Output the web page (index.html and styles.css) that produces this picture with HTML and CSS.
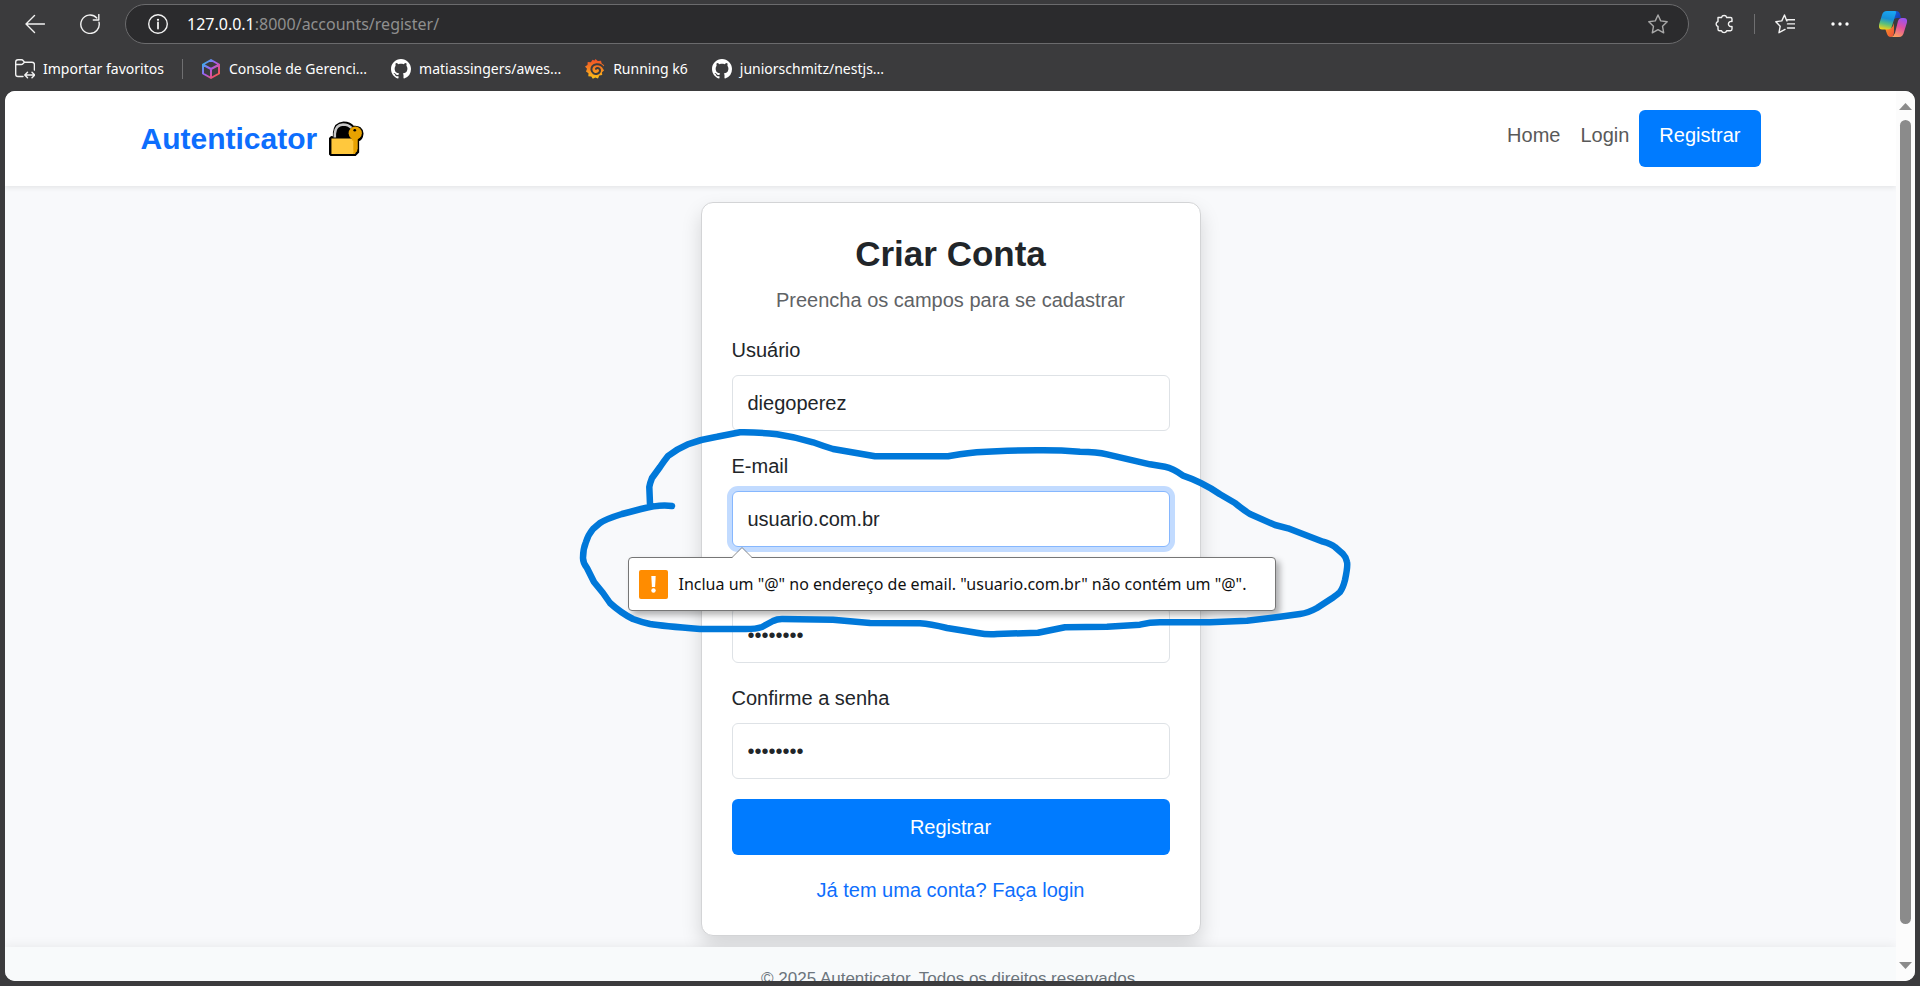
FILE: index.html
```html
<!DOCTYPE html>
<html lang="pt-BR">
<head>
<meta charset="utf-8">
<title>Autenticator - Criar Conta</title>
<link rel="stylesheet" href="styles.css">
</head>
<body>
<svg class="defs" width="0" height="0" aria-hidden="true">
  <defs>
    <symbol id="github" viewBox="0 0 16 16"><path fill="#fff" d="M8 0C3.58 0 0 3.58 0 8c0 3.54 2.29 6.53 5.47 7.59.4.07.55-.17.55-.38 0-.19-.01-.82-.01-1.49-2.01.37-2.53-.49-2.69-.94-.09-.23-.48-.94-.82-1.13-.28-.15-.68-.52-.01-.53.63-.01 1.08.58 1.23.82.72 1.21 1.87.87 2.33.66.07-.52.28-.87.51-1.07-1.78-.2-3.64-.89-3.64-3.95 0-.87.31-1.59.82-2.15-.08-.2-.36-1.02.08-2.12 0 0 .67-.21 2.2.82.64-.18 1.32-.27 2-.27s1.36.09 2 .27c1.53-1.04 2.2-.82 2.2-.82.44 1.1.16 1.92.08 2.12.51.56.82 1.27.82 2.15 0 3.07-1.87 3.75-3.65 3.95.29.25.54.73.54 1.48 0 1.07-.01 1.93-.01 2.2 0 .21.15.46.55.38A8.01 8.01 0 0 0 16 8c0-4.42-3.58-8-8-8z"/></symbol>
    <linearGradient id="cubeFill" x1="0" y1="0" x2="1" y2="1"><stop offset="0" stop-color="#1fc3e8"/><stop offset=".45" stop-color="#a35cf5"/><stop offset=".8" stop-color="#f0506e"/><stop offset="1" stop-color="#ff7a2f"/></linearGradient>
    <linearGradient id="grafanaFill" x1="0" y1="0" x2="0" y2="1"><stop offset="0" stop-color="#f04e28"/><stop offset=".5" stop-color="#f58220"/><stop offset="1" stop-color="#fcc419"/></linearGradient>
    <linearGradient id="copA" x1=".5" y1="0" x2=".3" y2="1"><stop offset="0" stop-color="#19a5f2"/><stop offset=".4" stop-color="#168fd6"/><stop offset=".7" stop-color="#5cc07a"/><stop offset="1" stop-color="#f6d218"/></linearGradient>
    <linearGradient id="copB" x1=".7" y1="0" x2=".3" y2="1"><stop offset="0" stop-color="#9a52ee"/><stop offset=".45" stop-color="#e0509f"/><stop offset="1" stop-color="#fca15c"/></linearGradient>
    <linearGradient id="copC" x1="0" y1="0" x2="1" y2="1"><stop offset="0" stop-color="#1b63e0"/><stop offset="1" stop-color="#1535a8"/></linearGradient>
    <linearGradient id="copD" x1="0" y1="0" x2="1" y2="1"><stop offset="0" stop-color="#f9a11f"/><stop offset="1" stop-color="#ee4b3c"/></linearGradient>
  </defs>
</svg>

<header class="browser">
  <div class="toolbar">
    <button class="tool" aria-label="Voltar"><svg width="20" height="20" viewBox="0 0 20 20"><path d="M19.500 10H1M9.500 1.500 1 10l8.500 8.500"/></svg></button>
    <button class="tool" aria-label="Atualizar"><svg width="20" height="20" viewBox="0 0 20 20"><path d="M19 8.200A9.200 9.200 0 1 1 16.800 4M18.800.500v5.500h-5.500"/></svg></button>
    <div class="address">
      <svg class="line" width="20" height="20" viewBox="0 0 20 20"><circle cx="10" cy="10" r="9.300"/><path d="M10 8.500v6" stroke-width="1.800"/><circle cx="10" cy="5.800" r="1.100" fill="#fff" stroke="none"/></svg>
      <span class="url"><b>127.0.0.1</b>:8000/accounts/register/</span>
      <button class="tool star" aria-label="Adicionar aos favoritos"><svg width="20" height="20" viewBox="0 0 20 20"><path d="m10 1 2.700 5.900 6.500.800-4.700 4.500 1.200 6.600L10 15.600l-5.700 3.200 1.200-6.600L.8 7.700l6.500-.8z"/></svg></button>
    </div>
    <button class="tool" aria-label="Extensões"><svg width="20" height="20" viewBox="0 0 20 20"><path d="M4 3.500h3.500a2.700 2.700 0 0 1 5.200 0h3.800q1.500 0 1.500 1.500v2.600a2.600 2.600 0 1 0 0 4.800V15q0 1.700-1.500 1.700h-3.800a2.700 2.700 0 0 1-5.200 0H5.500Q4 16.700 4 15.200v-2.700a2.600 2.600 0 0 1 0-5z"/></svg></button>
    <span class="divider"></span>
    <button class="tool" aria-label="Favoritos"><svg width="20" height="20" viewBox="0 0 20 20"><path d="M12 6.900h-.200L9.500 1 6.800 6.900.8 7.700l4.400 4.500-1.200 6.500 6-3.300M12.500 9.900h7.500M12.500 14h7.500M12.500 5.800h7.500"/></svg></button>
    <button class="tool" aria-label="Configurações e mais"><svg width="20" height="20" viewBox="0 0 20 20"><g fill="#fff" stroke="none"><circle cx="3" cy="10" r="1.700"/><circle cx="10" cy="10" r="1.700"/><circle cx="17" cy="10" r="1.700"/></g></svg></button>
    <button class="tool copilot" aria-label="Copilot"><svg width="28" height="26" viewBox="0 0 28 26"><g stroke="none"><path fill="url(#copC)" d="M13 0h4q3 0 4 3l1 4h-4q-3 0-4 3z"/><path fill="url(#copD)" d="M6 17h5q2 0 3-2l1-3 0 9q0 5-4 5-2 0-3-3z"/><path fill="url(#copA)" d="M8 0h8q1.500.500 1 2l-4 13q-1 3.500-4 3.500H3Q-1 18.500.2 13L3 4q1-4 5-4z"/><path fill="url(#copB)" d="M20 26h-8q3-1 4-4l3-12q1-3 4-3h2q4 0 2.800 5L25 21q-1 5-5 5z"/></g></svg></button>
  </div>
  <nav class="bookmarks" aria-label="Favoritos">
    <a href="#"><svg class="line" width="20" height="20" viewBox="0 0 20 20"><path d="M8 17.500H3q-2.300 0-2.300-2.300V3Q.7.800 3 .8h3.500q1 0 1.800 1l1.200 1.400H17q2.400 0 2.400 2.400V11M.700 5.500h5.500q1 0 1.700-.800l1.600-1.500M10.500 16h8.500M12.500 13.200 9.800 16l2.700 2.800M17 13.200l2.700 2.800-2.700 2.800"/></svg>Importar favoritos</a>
    <span class="divider"></span>
    <a href="#"><svg width="20" height="20" viewBox="0 0 20 20"><path fill="none" stroke="url(#cubeFill)" stroke-width="2" stroke-linejoin="round" d="M10 1l8 4.500v9L10 19l-8-4.500v-9zM2.500 6l7.500 4 7.500-4M10 10v8.500"/></svg>Console de Gerenci...</a>
    <a href="#"><svg width="20" height="20"><use href="#github"/></svg>matiassingers/awes...</a>
    <a href="#"><svg width="20" height="20" viewBox="0 0 20 20"><path fill="url(#grafanaFill)" d="m10.500 0 2.300 2 3.200-.300.700 2.800 2.500 1.700L18 8.500l1 3-2 1.700.2 2.800-2.900.500L13 19.500l-2.700-1-2.500 1.300-1.500-2.300-3-.200.200-3L1 12.500l1-2.700L0 7.500l2.500-1.600L2.700 3l3.200.200L7.500.800l2 .600z"/><path fill="none" stroke="#3b3b3d" stroke-width="2" stroke-linecap="round" d="M19 9.500C17.500 6.500 14.500 5 11.500 5.200 8 5.500 6 8.200 6.500 11.200c.5 2.800 3.200 4.300 5.700 3.600 2.300-.600 3.300-2.800 2.500-4.500-.9-1.600-3-1.800-3.700-.500"/></svg>Running k6</a>
    <a href="#"><svg width="20" height="20"><use href="#github"/></svg>juniorschmitz/nestjs...</a>
  </nav>
</header>

<div class="viewport">
  <div class="page">
    <header class="site-header">
      <div class="container">
        <a class="brand" href="#">Autenticator
          <svg width="35" height="35" viewBox="0 0 36 36"><path fill="#000" stroke="#000" stroke-width="2" d="M5 17V12Q6 2 15 1.500 22 1.500 25 6q9-1 9.500 7-.5 6-4.500 7v12l-3 3H2l-1-1V18l1.500-1.500z"/><path fill="none" stroke="#c8c8c8" stroke-width="2.600" d="M6 17v-4Q6.500 4 14.500 3.500 20 3.500 23 7"/><path fill="#ffc83d" d="M2.500 18H27v16H2.500z"/><path fill="#e8a200" d="M25 18h4v13l-3 3h-1z"/><circle cx="27" cy="12.500" r="6.800" fill="#e8a200"/><path fill="#e8a200" d="M23.500 17h6v12l-3 2-3-2z"/><path fill="#ffc83d" d="M22 20h3v12h-3z"/><circle cx="26.500" cy="9.500" r="1.400" fill="#000"/></svg>
        </a>
        <nav class="site-nav">
          <a href="#">Home</a>
          <a href="#">Login</a>
          <a class="cta" href="#">Registrar</a>
        </nav>
      </div>
    </header>

    <main class="main">
      <form class="card" novalidate>
        <h1>Criar Conta</h1>
        <p class="lead">Preencha os campos para se cadastrar</p>
        <div class="field">
          <label for="user">Usuário</label>
          <input id="user" type="text" value="diegoperez">
        </div>
        <div class="field">
          <label for="email">E-mail</label>
          <input id="email" class="focused" type="email" value="usuario.com.br">
          <div class="bubble" role="alert">
            <svg class="bubble-arrow" width="20" height="11" viewBox="0 0 20 11"><path fill="#fff" d="M0 11 10 1l10 10z"/><path fill="none" stroke="#8a8a8a" d="M0 10.500 10 .500l10 10"/></svg>
            <svg width="29" height="29" viewBox="0 0 29 29"><rect width="29" height="29" rx="2" fill="#ff8c00"/><path fill="#fff" d="M12.300 6h4.400l-.6 11h-3.200z"/><circle cx="14.500" cy="20.500" r="2.200" fill="#fff"/></svg>
            <span>Inclua um "@" no endereço de email. "usuario.com.br" não contém um "@".</span>
          </div>
        </div>
        <div class="field masked">
          <input id="pass" type="password" aria-label="Senha" value="senha123">
        </div>
        <div class="field">
          <label for="pass2">Confirme a senha</label>
          <input id="pass2" type="password" value="senha123">
        </div>
        <button class="submit" type="submit">Registrar</button>
        <a class="login" href="#">Já tem uma conta? Faça login</a>
        <svg class="scribble" width="790" height="225" viewBox="570 420 790 225" aria-hidden="true"><path d="M672 506Q660 504 641 509L622 514Q606 519 600 523L593 529Q588 535 586 542 583 549 583 558 583 563 587 568L594 582 603 593 610 603Q621 613 633 619 641 622 650 624 662 626 700 629H746Q756 629 762 627L773 621Q777 619 782 619L833 619.700 870 623 920 623.300Q930 624 947 628L978 633Q988 635 997 634L1038 632.700 1065 627.300 1107 626.700 1140 624.700Q1150 622.300 1160 622.300H1210L1247 620.700 1280 616.700 1300 614Q1308 613 1317 608L1332 598.300Q1338 594 1340 592 1343 588 1345 580 1348 566 1347 562 1346 557 1343 554L1335 547Q1331 544 1323 541.700L1288 528.300 1275 525 1250 514Q1242 509 1235 503L1220 494.300Q1202 482 1183 475.700 1173 468 1165 466.700L1150 464.300 1107 454.300Q1097 452 1080 451.700 1058 450 1037 450.300 1017 450.300 997 451.300 975 452 960 454.300L948 456.300H875L833 449Q823 446 813 442.300 795 437 777 434.300 757 432 740 432.300L717 436.700Q702 439 688 444.300 677 449 668 456 664 461 660 467L652 478Q650 483 649.300 487L650 504"/></svg>
      </form>
    </main>

    <footer class="site-footer">© 2025 Autenticator. Todos os direitos reservados.</footer>
  </div>
  <div class="scrollbar" aria-hidden="true">
    <svg width="13" height="7"><path fill="#8b8b8b" d="M0 7 6.500 0 13 7z"/></svg>
    <span class="thumb"></span>
    <svg width="13" height="7"><path fill="#8b8b8b" d="M0 0h13L6.500 7z"/></svg>
  </div>
</div>
</body>
</html>
```
FILE: styles.css
```css
*, *::before, *::after { box-sizing: border-box; }

body {
  margin: 0;
  height: 100vh;
  display: flex;
  flex-direction: column;
  overflow: hidden;
  background: #3b3b3d;
  color: #212529;
  font: 20px/30px "Liberation Sans", Arial, sans-serif;
}

a { text-decoration: none; color: inherit; }
svg { display: block; flex: none; }
.defs { position: absolute; }

/* Browser frame */
.browser {
  flex: none;
  padding: 4px 13px 0 15px;
  color: #fff;
  font-family: "Noto Sans", "Open Sans", sans-serif;
}

.toolbar {
  display: flex;
  align-items: center;
  height: 40px;
}

.tool {
  display: flex;
  margin: 0;
  padding: 0;
  border: 0;
  background: none;
}

.tool svg, .line {
  fill: none;
  stroke: #f2f2f2;
  stroke-width: 1.4;
  stroke-linecap: round;
  stroke-linejoin: round;
}

.toolbar > .tool { margin-left: 35px; }
.toolbar > .tool:first-child { margin-left: 10px; }

.address {
  flex: 1;
  display: flex;
  align-items: center;
  height: 40px;
  margin: 0 -10px 0 25px;
  padding: 0 20px 0 22px;
  border: 1px solid #6b6b6d;
  border-radius: 20px;
  background: #2b2b2d;
}

.url {
  flex: 1;
  padding-left: 19px;
  color: #8f8f8f;
  font-size: 16px;
}

.url b { color: #fff; font-weight: 400; }
.star svg { stroke: #a8a8a8; }

.divider {
  width: 1px;
  height: 20px;
  background: #6f6f71;
}

.toolbar .divider { margin: 0 -15px 0 20px; }
.toolbar > .copilot { margin-left: 29px; }

.bookmarks {
  display: flex;
  align-items: center;
  gap: 24px;
  height: 47px;
  padding-top: 3px;
  font-size: 14px;
  line-height: 20px;
}

.bookmarks a {
  display: flex;
  align-items: center;
  gap: 8px;
}

.bookmarks .divider { margin: 0 -6px; }

/* Page area */
.viewport {
  flex: 1;
  min-height: 0;
  display: flex;
  margin: 0 5px 5px;
  border-radius: 10px;
  overflow: hidden;
  background: #f8f9fb;
}

.page {
  flex: 1;
  min-width: 0;
  overflow: hidden;
}

.site-header {
  position: relative;
  padding: 19px 0;
  background: #fff;
  box-shadow: 0 2px 5px rgba(0, 0, 0, .08);
}

.container {
  display: flex;
  justify-content: space-between;
  align-items: center;
  max-width: 1650px;
  margin: 0 auto;
  padding: 0 15px;
}

.brand {
  display: flex;
  align-items: center;
  gap: 12px;
  color: #0d6efd;
  font-size: 30px;
  font-weight: 700;
  line-height: 45px;
}

.site-nav { display: flex; }

.site-nav a {
  padding: 10px 10px 17px;
  color: #595959;
}

.site-nav .cta {
  padding: 10px 20px 17px;
  border-radius: 6px;
  background: #007bff;
  color: #fff;
}

.main {
  padding: 16px 0 11px;
}

.card {
  position: relative;
  width: 500px;
  max-width: 100%;
  margin: 0 auto;
  padding: 30px;
  border: 1px solid #d3d4d6;
  border-radius: 12px;
  background: #fff;
  box-shadow: 0 10px 20px rgba(0, 0, 0, .15);
}

h1 {
  margin: 0 0 10px;
  font-size: 35px;
  line-height: 42px;
  text-align: center;
}

.lead {
  margin: 0 0 20px;
  color: #5f6366;
  text-align: center;
}

.field {
  position: relative;
  margin-bottom: 20px;
}

.field label {
  display: block;
  margin-bottom: 10px;
}

.masked { padding-top: 40px; }

.field input {
  display: block;
  width: 100%;
  padding: 12px 15px;
  border: 1px solid #dee2e6;
  border-radius: 6px;
  outline: 0;
  background: #fff;
  color: #212529;
  font: inherit;
}

.field .focused {
  border-color: #86b7fe;
  box-shadow: 0 0 0 5px #c2dbff;
}

.submit {
  display: block;
  width: 100%;
  margin: 0 0 20px;
  padding: 13px 20px;
  border: 0;
  border-radius: 6px;
  background: #007bff;
  color: #fff;
  font: inherit;
}

.login {
  display: block;
  color: #0d6efd;
  text-align: center;
}

/* Validation message */
.bubble {
  position: absolute;
  z-index: 1;
  top: 106px;
  left: -104px;
  display: flex;
  align-items: center;
  gap: 11px;
  min-width: 648px;
  height: 54px;
  padding: 0 10px;
  border: 1px solid #767676;
  border-radius: 4px;
  background: #fff;
  box-shadow: 4px 4px 6px rgba(0, 0, 0, .3);
  color: #111;
  font-family: "Noto Sans", "Open Sans", sans-serif;
  font-size: 16px;
  white-space: nowrap;
}

.bubble-arrow {
  position: absolute;
  top: -11px;
  left: 103px;
}

.scribble {
  position: absolute;
  z-index: 2;
  top: 217px;
  left: -132px;
  fill: none;
  stroke: #0078d9;
  stroke-width: 6.5;
  stroke-linecap: round;
  stroke-linejoin: round;
  pointer-events: none;
}

.site-footer {
  position: relative;
  padding: 20px 0;
  background: #f8fafb;
  box-shadow: 0 -2px 10px rgba(0, 0, 0, .06);
  color: #6c757d;
  font-size: 17px;
  line-height: 24px;
  text-align: center;
}

.scrollbar {
  flex: none;
  display: flex;
  flex-direction: column;
  align-items: center;
  gap: 10px;
  width: 19px;
  padding: 12px 0;
  background: #fcfcfc;
}

.thumb {
  flex: 0 1 804px;
  width: 11px;
  margin-bottom: auto;
  border-radius: 6px;
  background: #8b8b8b;
}
```
